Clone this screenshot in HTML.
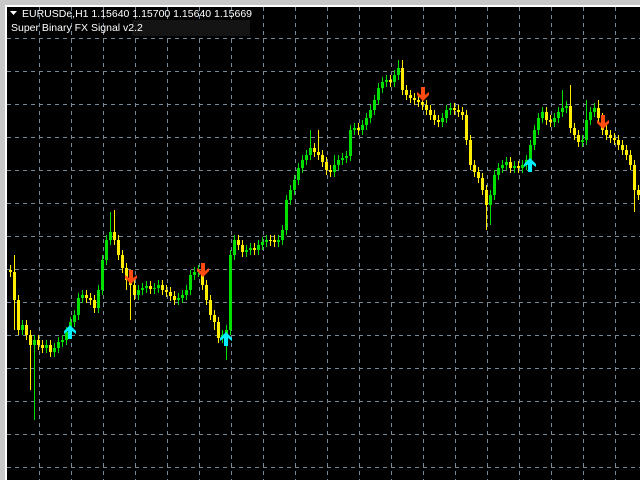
<!DOCTYPE html>
<html><head><meta charset="utf-8"><style>
html,body{margin:0;padding:0;background:#000;width:640px;height:480px;overflow:hidden}
svg{display:block}
</style></head><body>
<svg width="640" height="480" viewBox="0 0 640 480" xmlns="http://www.w3.org/2000/svg">
<rect x="0" y="0" width="640" height="480" fill="#000"/>
<g stroke="#778899" stroke-width="1" stroke-dasharray="4,4" fill="none">
<path d="M39.5 7V480M71.5 7V480M103.5 7V480M135.5 7V480M167.5 7V480M199.5 7V480M231.5 7V480M263.5 7V480M295.5 7V480M327.5 7V480M359.5 7V480M391.5 7V480M423.5 7V480M455.5 7V480M487.5 7V480M519.5 7V480M551.5 7V480M583.5 7V480M615.5 7V480"/>
<path d="M7 38.5H640M7 71.5H640M7 104.5H640M7 137.5H640M7 170.5H640M7 203.5H640M7 236.5H640M7 269.5H640M7 302.5H640M7 335.5H640M7 368.5H640M7 401.5H640M7 434.5H640M7 467.5H640"/>
</g>
<g transform="translate(0.5,0)" fill="none">
<path stroke="#00e000" stroke-width="1" d="M22 320V335M34 335V420M46 340V353M54 343V357M58 337V353M62 335V347M66 327V345M70 317V337M74 310V327M78 293V320M82 290V303M98 285V313M102 255V295M106 235V265M110 212V245M138 285V300M142 283V295M146 281V293M154 283V294M158 280V293M178 293V305M182 290V303M186 285V300M190 270V295M194 267V280M198 265V277M222 330V343M226 325V360M230 250V335M234 235V260M246 245V257M250 243V255M258 240V255M262 237V250M266 235V247M278 235V247M282 225V245M286 195V235M290 185V205M294 175V195M298 163V185M302 155V173M306 150V165M310 130V160M334 155V177M338 155V170M342 153V165M346 151V163M350 125V161M354 123V135M362 120V135M366 113V130M370 105V123M374 95V115M378 83V105M382 77V93M386 75V87M394 70V87M398 60V80M442 113V127M446 105V123M450 103V115M490 190V225M494 170V200M498 163V180M502 160V173M506 157V170M514 161V173M522 160V173M526 155V170M530 140V165M534 125V150M538 113V135M542 107V123M554 113V127M558 107V123M562 90V117M566 101V113M582 135V147M586 100V145M590 107V125M594 103V117"/>
<path stroke="#00e000" stroke-width="3" d="M22 330V325M34 345V340M46 348V345M54 352V348M58 348V342M62 342V340M66 340V332M70 332V322M74 322V315M78 315V298M82 298V295M98 308V290M102 290V260M106 260V240M110 240V232M138 295V290M142 290V288M146 288V286M154 289V288M158 288V285M178 300V298M182 298V295M186 295V290M190 290V275M194 275V272M198 272V270M222 338V335M226 335V330M230 330V255M234 255V240M246 252V250M250 250V248M258 250V245M262 245V242M266 242V240M278 242V240M282 240V230M286 230V200M290 200V190M294 190V180M298 180V168M302 168V160M306 160V155M310 155V148M334 172V165M338 165V160M342 160V158M346 158V156M350 156V130M354 130V128M362 130V125M366 125V118M370 118V110M374 110V100M378 100V88M382 88V82M386 82V80M394 82V75M398 75V68M442 122V118M446 118V110M450 110V108M490 205V195M494 195V175M498 175V168M502 168V165M506 165V162M514 168V166M522 168V165M526 165V160M530 160V145M534 145V130M538 130V118M542 118V112M554 122V118M558 118V112M562 112V108M566 108V106M582 142V140M586 140V120M590 120V112M594 112V108"/>
<path stroke="#ffee00" stroke-width="1" d="M10 265V277M14 255V330M18 295V335M26 320V340M30 330V390M38 335V350M42 340V353M50 340V357M86 290V303M90 293V305M94 295V313M114 210V245M118 235V260M122 250V273M126 263V290M130 275V320M134 280V300M150 281V294M162 280V295M166 285V297M170 287V301M174 291V305M202 265V290M206 280V305M210 295V320M214 310V330M218 317V343M238 235V250M242 240V257M254 243V255M270 235V246M274 235V247M314 143V157M318 130V160M322 150V167M326 157V175M330 165V177M358 123V135M390 75V87M402 60V95M406 85V100M410 90V103M414 93V105M418 95V107M422 97V110M426 100V115M430 105V120M434 110V125M438 115V127M454 103V115M458 105V117M462 107V120M466 110V145M470 135V170M474 160V177M478 167V183M482 173V195M486 185V230M510 157V173M518 161V173M546 107V125M550 115V127M570 85V133M574 123V140M578 130V147M598 100V123M602 113V135M606 125V140M610 130V143M614 133V145M618 135V150M622 140V155M626 145V160M630 150V170M634 160V212M638 185V200"/>
<path stroke="#ffee00" stroke-width="3" d="M10 270V272M14 272V300M18 300V330M26 325V335M30 335V345M38 340V345M42 345V348M50 345V352M86 295V298M90 298V300M94 300V308M114 232V240M118 240V255M122 255V268M126 268V280M130 280V285M134 285V295M150 286V289M162 285V290M166 290V292M170 292V296M174 296V300M202 270V285M206 285V300M210 300V315M214 315V322M218 322V338M238 240V245M242 245V252M254 248V250M270 240V241M274 240V242M314 148V152M318 152V155M322 155V162M326 162V170M330 170V172M358 128V130M390 80V82M402 68V90M406 90V95M410 95V98M414 98V100M418 100V102M422 102V105M426 105V110M430 110V115M434 115V120M438 120V122M454 108V110M458 110V112M462 112V115M466 115V140M470 140V165M474 165V172M478 172V178M482 178V190M486 190V205M510 162V168M518 166V168M546 112V120M550 120V122M570 106V128M574 128V135M578 135V142M598 108V118M602 118V130M606 130V135M610 135V138M614 138V140M618 140V145M622 145V150M626 150V155M630 155V165M634 165V190M638 190V195"/>
</g>
<g fill="#ff4a10">
<polygon transform="translate(131,278)" points="-2,-8 2,-8 2,0 6,-3 6,0 0,6 -6,0 -6,-3 -2,0"/>
<polygon transform="translate(203,271)" points="-2,-8 2,-8 2,0 6,-3 6,0 0,6 -6,0 -6,-3 -2,0"/>
<polygon transform="translate(423,95)" points="-2,-8 2,-8 2,0 6,-3 6,0 0,6 -6,0 -6,-3 -2,0"/>
<polygon transform="translate(603,123)" points="-2,-8 2,-8 2,0 6,-3 6,0 0,6 -6,0 -6,-3 -2,0"/>
</g>
<g fill="#00f0ff">
<polygon transform="translate(70,331)" points="-2,8 2,8 2,0 6,3 6,0 0,-6 -6,0 -6,3 -2,0"/>
<polygon transform="translate(226,338)" points="-2,8 2,8 2,0 6,3 6,0 0,-6 -6,0 -6,3 -2,0"/>
<polygon transform="translate(530,164)" points="-2,8 2,8 2,0 6,3 6,0 0,-6 -6,0 -6,3 -2,0"/>
</g>
<rect x="132" y="20" width="118" height="16" fill="#141414"/>
<polygon points="10,11 17,11 13.5,15" fill="#fff"/>
<text x="22" y="17" fill="#fff" font-family="Liberation Sans, sans-serif" font-size="10.5">EURUSDe,H1  1.15640 1.15700 1.15640 1.15669</text>
<text x="11" y="31" fill="#fff" font-family="Liberation Sans, sans-serif" font-size="10.5">Super Binary FX Signal v2.2</text>
<rect x="0" y="0" width="640" height="5" fill="#c8c8c8"/>
<rect x="0" y="5" width="640" height="2" fill="#fff"/>
<rect x="0" y="0" width="5" height="480" fill="#c8c8c8"/>
<rect x="5" y="5" width="2" height="475" fill="#fff"/>
</svg>
</body></html>
